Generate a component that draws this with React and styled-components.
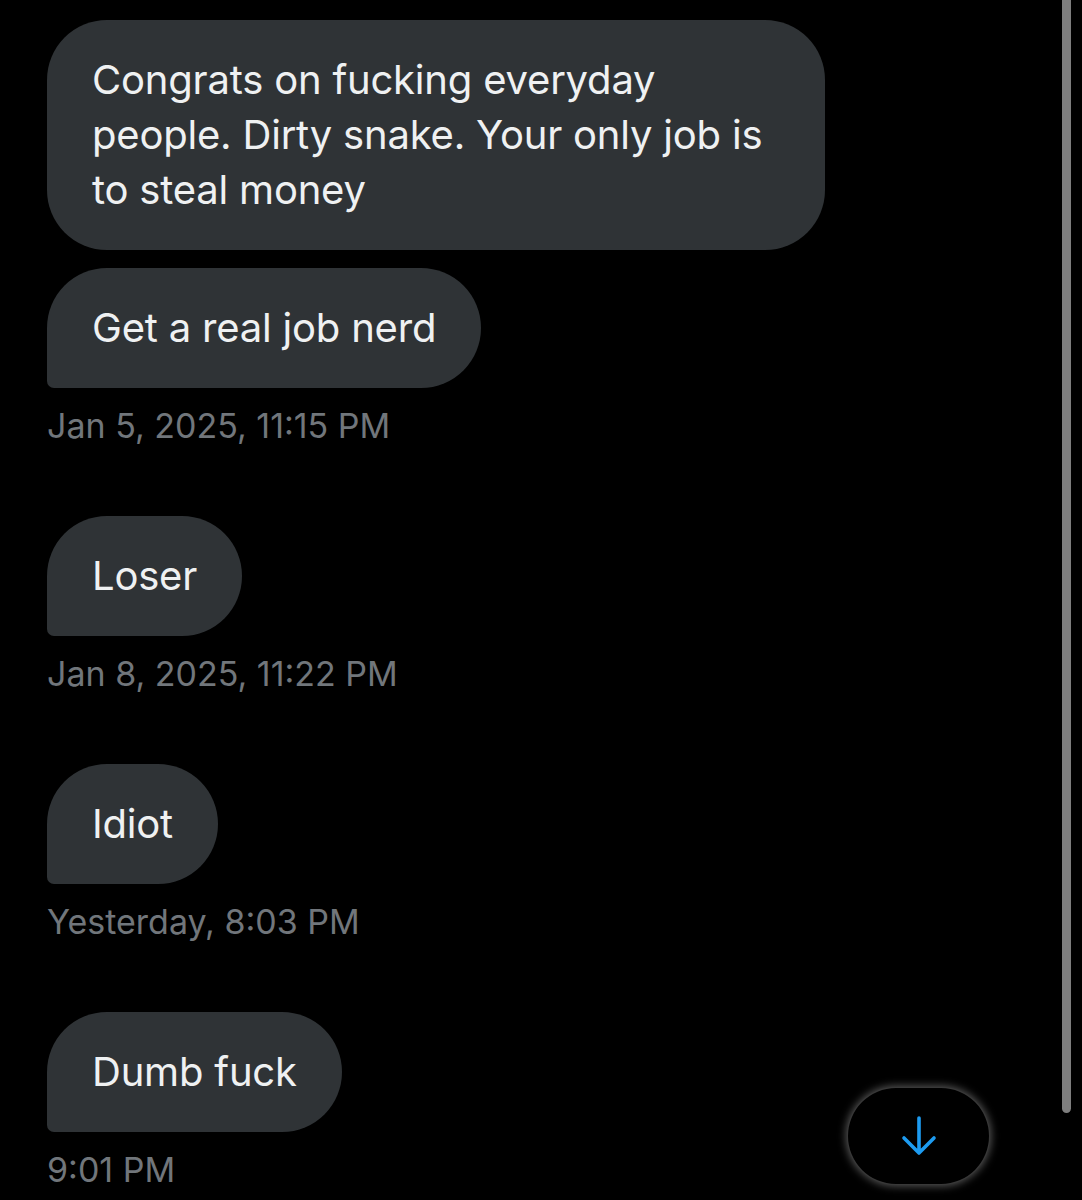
import React from 'react';
import styled, { createGlobalStyle } from 'styled-components';

const GlobalStyle = createGlobalStyle`
	html, body {
		margin: 0;
		padding: 0;
		background: #000000;
	}
	body {
		font-family: Inter, 'Noto Sans', sans-serif;
		-webkit-font-smoothing: antialiased;
	}
`;

const Screen = styled.div`
	position: relative;
	width: 1082px;
	height: 1200px;
	overflow: hidden;
	background: #000000;
`;

const Thread = styled.div`
	display: flex;
	flex-direction: column;
	align-items: flex-start;
	padding: 20px 0 0 47px;
`;

const Group = styled.div`
	display: flex;
	flex-direction: column;
	align-items: flex-start;
	gap: 18px;
	margin-bottom: ${(p) => (p.$last ? 0 : 70)}px;
`;

const Bubble = styled.div`
	box-sizing: border-box;
	max-width: 778px;
	padding: 32px 45px 33px;
	background: #2f3336;
	border-radius: ${(p) => (p.$tail ? '60px 60px 60px 7px' : '60px')};
	color: #eff1f2;
	font-size: 40px;
	line-height: 55px;
	letter-spacing: -0.2px;
`;

const Stamp = styled.div`
	color: #71767b;
	font-size: 34px;
	line-height: 40px;
`;

const ScrollThumb = styled.div`
	position: absolute;
	top: -20px;
	left: 1062px;
	width: 9px;
	height: 1133px;
	border-radius: 5px;
	background: #7e7e7e;
`;

const JumpButton = styled.button`
	position: absolute;
	left: 847px;
	top: 1087px;
	width: 143px;
	height: 98px;
	display: flex;
	align-items: center;
	justify-content: center;
	padding: 0;
	background: #000000;
	border: 1px solid rgba(255, 255, 255, 0.22);
	border-radius: 49px;
	box-shadow: 0 0 9px 1px rgba(255, 255, 255, 0.35);
`;

const groups = [
	{
		bubbles: [
			'Congrats on fucking everyday people. Dirty snake. Your only job is to steal money',
			'Get a real job nerd',
		],
		time: 'Jan 5, 2025, 11:15 PM',
	},
	{ bubbles: ['Loser'], time: 'Jan 8, 2025, 11:22 PM' },
	{ bubbles: ['Idiot'], time: 'Yesterday, 8:03 PM' },
	{ bubbles: ['Dumb fuck'], time: '9:01 PM' },
];

function ArrowDown() {
	return (
		<svg width='40' height='44' viewBox='0 0 40 44' fill='none'>
			<path
				d='M20 4 V39 M5 24 L20 39 L35 24'
				stroke='#1d9bf0'
				strokeWidth='3.6'
				strokeLinecap='round'
				strokeLinejoin='round'
			/>
		</svg>
	);
}

export default function App() {
	return (
		<Screen>
			<GlobalStyle />
			<Thread>
				{groups.map((g, i) => (
					<Group key={g.time} $last={i === groups.length - 1}>
						{g.bubbles.map((b, j) => (
							<Bubble key={b} $tail={j === g.bubbles.length - 1}>
								{b}
							</Bubble>
						))}
						<Stamp>{g.time}</Stamp>
					</Group>
				))}
			</Thread>
			<ScrollThumb />
			<JumpButton aria-label='Scroll to bottom'>
				<ArrowDown />
			</JumpButton>
		</Screen>
	);
}
